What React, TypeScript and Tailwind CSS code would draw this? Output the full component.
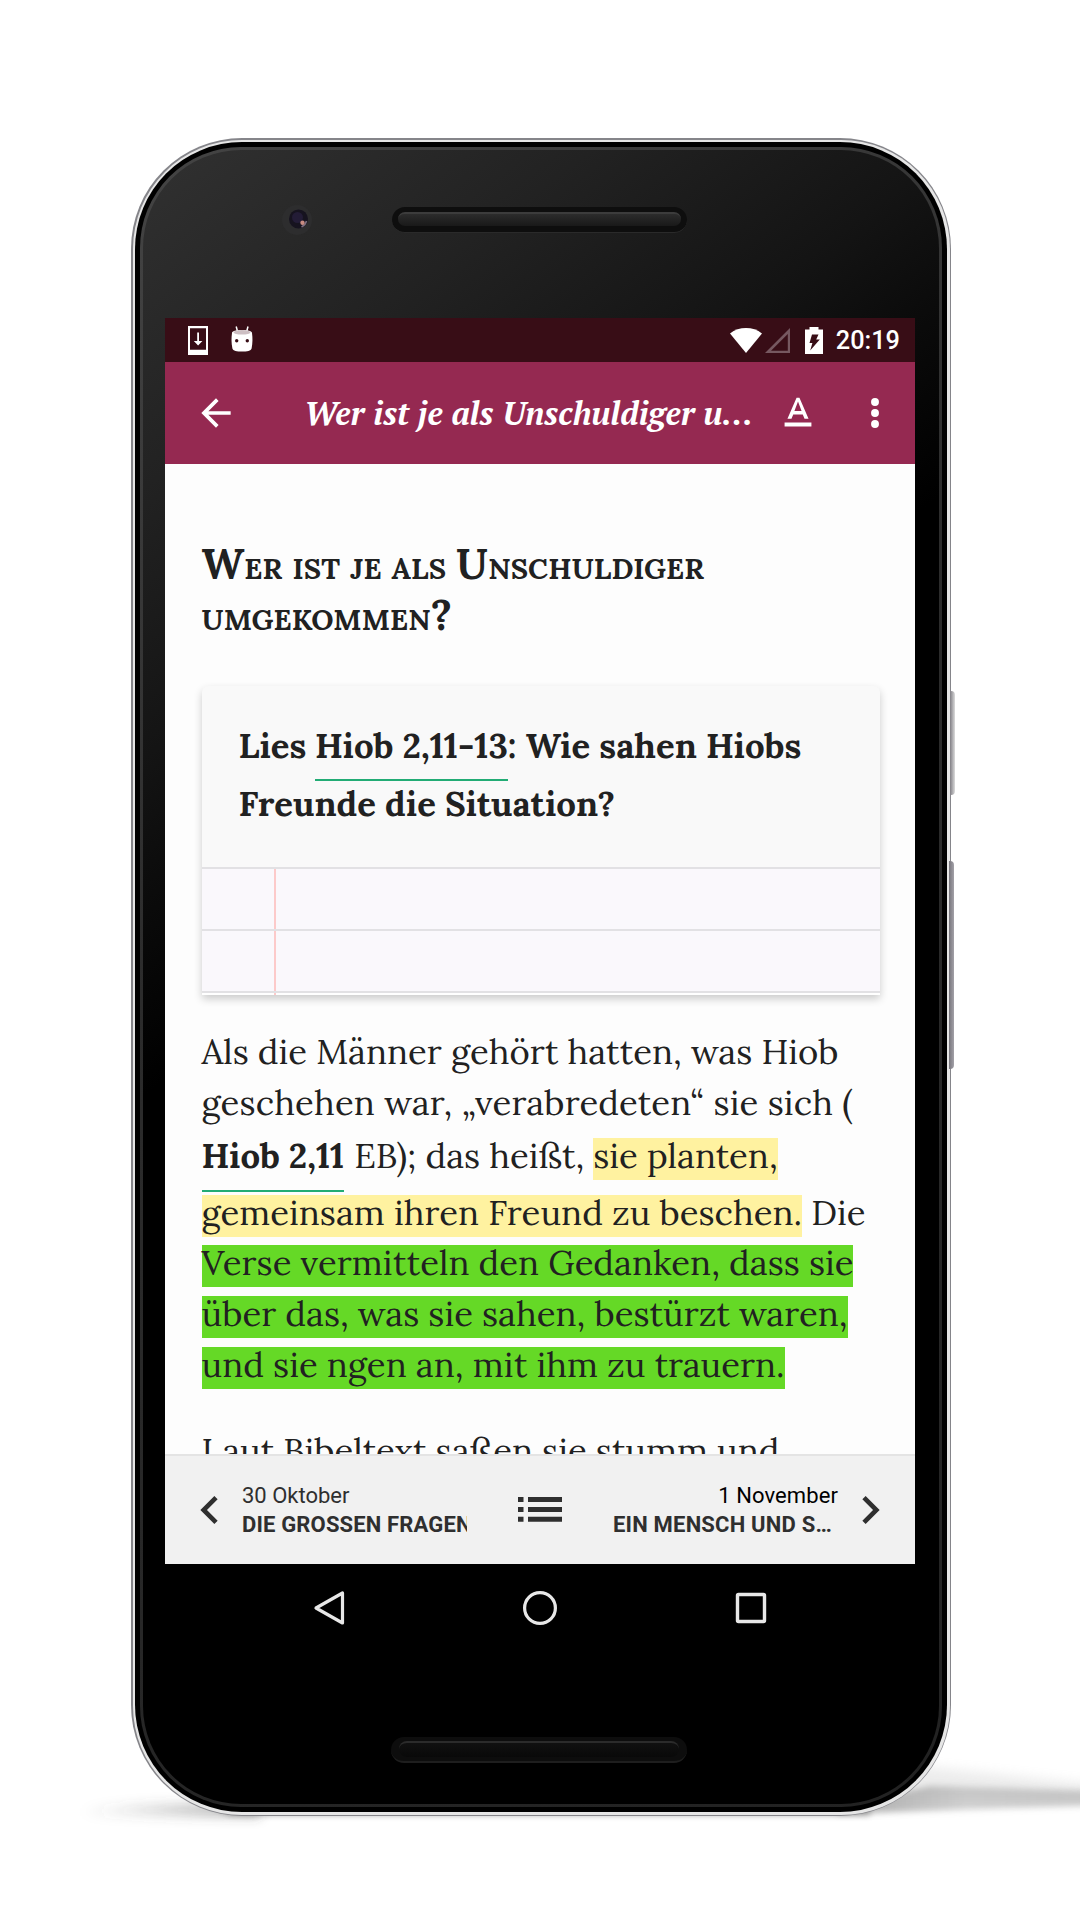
import type { ReactNode } from 'react';

function StatusBar() {
  return (
    <div className="flex h-11 shrink-0 items-center bg-[#380d16] pl-[23px] pr-[15px] text-white">
      <svg width="20" height="29" viewBox="0 0 20 29">
        <path fill="currentColor" fillRule="evenodd" d="M0 0h20v29H0zM2 2.2v21.6h16V2.2z" />
        <path fill="currentColor" d="M9.2 6.5h1.8V15h3.4L10.1 19.5 5.8 15h3.4z" />
      </svg>
      <svg width="22" height="26" viewBox="0 0 22 26" className="mb-[3px] ml-[23px]">
        <path stroke="currentColor" strokeWidth="1.5" d="M5.2.5 6.4 5M17 .5 15.8 5" />
        <path fill="currentColor" d="M1 7c0-2 4-3 10-3s10 1 10 3c.7 5 .7 10-.4 15.500C20 25 16 25.500 11 25.500S2 25 1.400 22.500C.3 17 .3 12 1 7z" />
        <ellipse cx="11" cy="6.300" rx="8.500" ry="2.300" fill="#cdbfc3" />
        <circle cx="5.700" cy="14.800" r="1.700" fill="#380d16" />
        <circle cx="16.300" cy="14.800" r="1.700" fill="#380d16" />
      </svg>
      <svg width="32" height="25" viewBox="0 0 32 25" className="ml-auto">
        <path fill="currentColor" d="M0 5.500C9-1.800 23-1.800 32 5.500L16 25z" />
      </svg>
      <svg width="26" height="25" viewBox="0 0 26 25" className="ml-[3px] text-[#765860]">
        <path fill="currentColor" fillRule="evenodd" d="M25 0v25H0zM22.800 6 6 22.800h16.800z" />
      </svg>
      <svg width="18" height="27" viewBox="0 0 18 27" className="ml-3.5">
        <path fill="currentColor" d="M0 2.500h4.500V0h9v2.500H18V27H0z" />
        <path fill="#380d16" d="M7 7.500h6.500l-2.300 5h3.600L5.200 23.500l2.200-7.500H4.500z" />
      </svg>
      <span className="ml-[13px] mt-0.5 font-['Roboto'] text-[25.3px] leading-[30px] font-medium">20:19</span>
    </div>
  );
}

function AppBar() {
  return (
    <div className="flex h-[102px] shrink-0 items-center bg-[#952951] text-white">
      <svg width="44" height="44" viewBox="0 0 24 24" fill="currentColor" className="ml-[29px]">
        <path d="M20 11H7.830l5.590-5.590L12 4l-8 8 8 8 1.410-1.410L7.830 13H20v-2z" />
      </svg>
      <h1 className="ml-[66px] w-[451px] whitespace-nowrap font-['PT_Serif',serif] text-[32.4px] leading-[42px] font-bold italic">
        Wer ist je als Unschuldiger u…
      </h1>
      <svg width="46" height="46" viewBox="0 0 24 24" fill="currentColor" className="ml-[20px]">
        <path d="M5 17v2h14v-2H5zm4.500-4.200h5l.9 2.200h2.100L12.750 4h-1.500L6.500 15h2.100l.9-2.200zM12 5.980 13.870 11h-3.740L12 5.980z" />
      </svg>
      <svg width="44" height="44" viewBox="0 0 24 24" fill="currentColor" className="ml-8">
        <circle cx="12" cy="6" r="2.150" />
        <circle cx="12" cy="12" r="2.150" />
        <circle cx="12" cy="18" r="2.150" />
      </svg>
    </div>
  );
}

function Line({ className, children }: { className?: string; children: ReactNode }) {
  return <div className={'flex h-[42px] whitespace-nowrap leading-[36px] ' + (className ?? '')}>{children}</div>;
}

function Question() {
  return (
    <section className="mt-[45px] flex h-[309px] w-[678px] flex-col rounded-t-md bg-[#f9f9f9] shadow-[0_4px_8px_rgba(0,0,0,0.2)]">
      <div className="h-[181px] pl-[37px] pt-[27px] text-[34.75px] font-bold">
        <div className="flex h-[58px] whitespace-nowrap leading-[66px]">
          <span className="mr-[8.5px]">Lies</span>
          <span className="h-[68px] border-b-2 border-[#22ac75]">Hiob 2,11-13</span>
          <span>: Wie sahen Hiobs</span>
        </div>
        <div className="whitespace-nowrap leading-[66px]">Freunde die Situation?</div>
      </div>
      <div className="flex h-[62px] border-t-2 border-[#e2e1e4] bg-[#faf8fc]"><i className="ml-[72.5px] w-[2px] bg-[#fccaca]" /></div>
      <div className="flex h-[62px] border-t-2 border-[#e2e1e4] bg-[#faf8fc]"><i className="ml-[72.5px] w-[2px] bg-[#fccaca]" /></div>
      <div className="flex h-1 border-t-2 border-[#e2e1e4] bg-white"><i className="ml-[72.5px] w-[2px] bg-[#fccaca]" /></div>
    </section>
  );
}

function Article() {
  return (
    <main className="h-[990px] overflow-hidden bg-[#fdfdfd] pl-[36.5px] font-['Lora',serif] text-[#212121]">
      <h2 className="mt-[75px] whitespace-nowrap text-[42.1px] leading-[51px] font-bold [font-variant:small-caps] tracking-[0.1px] [word-spacing:-1.2px]">
        Wer ist je als Unschuldiger
        <br />
        umgekommen?
      </h2>
      <Question />
      <div className="mt-[39px] text-[34.68px]">
        <Line>Als die Männer gehört hatten, was Hiob</Line>
        <Line className="mt-[9px] tracking-[0.11px]">geschehen war, „verabredeten“ sie sich (</Line>
        <Line className="mt-[11px]">
          <b className="h-[54px] border-b-2 border-[#22ac75]">Hiob 2,11</b>
          <span className="ml-[10px]">EB); das heißt,</span>
          <mark className="ml-[9px] bg-[#fff2a0] text-inherit">sie planten,</mark>
        </Line>
        <Line className="mt-[14.500px]">
          <mark className="bg-[#fff2a0] text-inherit">gemeinsam ihren Freund zu beschen.</mark>
          <span className="ml-[9px]">Die</span>
        </Line>
        <Line className="mt-[8px]"><mark className="bg-[#65d926] text-inherit">Verse vermitteln den Gedanken, dass sie</mark></Line>
        <Line className="mt-[9px]"><mark className="bg-[#65d926] text-inherit">über das, was sie sahen, bestürzt waren,</mark></Line>
        <Line className="mt-[9px]"><mark className="bg-[#65d926] text-inherit">und sie ngen an, mit ihm zu trauern.</mark></Line>
        <Line className="mt-[44.500px]">Laut Bibeltext saßen sie stumm und</Line>
      </div>
    </main>
  );
}

function Pager() {
  return (
    <footer className="flex h-[110px] shrink-0 items-center border-t-2 border-[#e4e4e4] bg-[#f1f1f1] font-['Roboto'] text-[22px] leading-[29px] text-[#2f2f2f]">
      <svg width="18" height="28" viewBox="8 6 7.410 12" fill="currentColor" className="ml-[35px]">
        <path d="M15.410 7.410 14 6 8 12l6 6 1.410-1.410L10.830 12z" />
      </svg>
      <div className="ml-6 w-[225px] overflow-hidden whitespace-nowrap">
        <div>30 Oktober</div>
        <div className="font-bold tracking-[0.15px]">DIE GROSSEN FRAGEN</div>
      </div>
      <svg width="44" height="25" viewBox="0 0 44 25" fill="currentColor" className="mb-0.5 ml-[51px]">
        <path d="M0 0h5.500v5H0zM10 0h34v5H10zM0 10h5.500v5H0zM10 10h34v5H10zM0 19.700h5.500v5H0zM10 19.700h34v5H10z" />
      </svg>
      <div className="ml-[51px] w-[225px] whitespace-nowrap">
        <div className="text-right text-black tracking-[0.1px]">1 November</div>
        <div className="font-bold tracking-[0.2px]">EIN MENSCH UND S…</div>
      </div>
      <svg width="18" height="28" viewBox="8.590 6 7.410 12" fill="currentColor" className="ml-6">
        <path d="M8.590 16.590 13.170 12 8.590 7.410 10 6l6 6-6 6z" />
      </svg>
    </footer>
  );
}

function NavBar() {
  return (
    <nav className="flex h-[88px] items-center text-[#e8e8e8]">
      <svg width="34" height="36" viewBox="0 0 34 36" fill="none" stroke="currentColor" strokeWidth="3.200" strokeLinejoin="round" className="ml-[147px]">
        <path d="M30.500 3v30L4 18z" />
      </svg>
      <svg width="36" height="36" viewBox="0 0 36 36" fill="none" stroke="currentColor" strokeWidth="3.200" className="ml-[176px]">
        <circle cx="18" cy="18" r="15.400" />
      </svg>
      <svg width="32" height="32" viewBox="0 0 32 32" fill="none" stroke="currentColor" strokeWidth="3.400" className="ml-[177px]">
        <rect x="2.500" y="2.500" width="27" height="27" rx="1" />
      </svg>
    </nav>
  );
}

function FloorShadow() {
  return (
    <svg className="absolute bottom-0 left-0" width="1080" height="220" viewBox="0 1700 1080 220">
      <defs>
        <filter id="soft" x="-20%" y="-100%" width="140%" height="300%"><feGaussianBlur stdDeviation="6" /></filter>
        <filter id="tight" x="-20%" y="-100%" width="140%" height="300%"><feGaussianBlur stdDeviation="3" /></filter>
        <linearGradient id="fade" x1="0" x2="1"><stop offset="0" stopColor="#555" stopOpacity="0" /><stop offset="1" stopColor="#444" stopOpacity=".5" /></linearGradient>
        <linearGradient id="cast" x1="0" x2="1"><stop offset="0" stopColor="#666" stopOpacity=".6" /><stop offset=".5" stopColor="#999" stopOpacity=".45" /><stop offset="1" stopColor="#999" stopOpacity=".5" /></linearGradient>
      </defs>
      <path filter="url(#soft)" fill="url(#fade)" d="M80 1810 Q170 1800 260 1806 V1816Q150 1816 80 1814z" />
      <path filter="url(#tight)" fill="#000" opacity=".35" d="M210 1804H870V1815H230z" />
      <path filter="url(#tight)" fill="url(#cast)" d="M830 1808 930 1786 1100 1791V1805L840 1814z" />
      <path filter="url(#soft)" fill="#999" opacity=".18" d="M910 1765 1100 1785V1800H880z" />
    </svg>
  );
}

function Device() {
  return (
    <div className="relative h-[1678px] w-[820px] rounded-[111px] bg-[#85858a] p-[1.500px]">
      <div className="absolute left-[819px] top-[553px] h-[104px] w-[5px] rounded-r-sm bg-gradient-to-r from-[#807e84] to-[#dcdcdc]" />
      <div className="absolute left-[818px] top-[723px] h-[208px] w-[5px] rounded-r-sm bg-gradient-to-r from-[#77757c] to-[#a3a1a8]" />
      <div className="h-full rounded-[109px] bg-[#e6e6e6] p-[2.500px]">
        <div className="h-full rounded-[107px] bg-black p-[5px]">
          <div className="h-full rounded-[101px] bg-[linear-gradient(150deg,#444444_0%,#2c2c2c_40%,#222222_100%)] p-[3px]">
            <div className="h-full rounded-[98px] bg-[linear-gradient(143deg,#313131_0%,#222222_15%,#141414_27%,#0a0a0a_34%,#000000_42%)] px-[22px] pt-[168px]">
              <div className="flex h-[1246px] w-[750px] flex-col overflow-hidden">
                <StatusBar />
                <AppBar />
                <Article />
                <Pager />
              </div>
              <NavBar />
            </div>
          </div>
        </div>
      </div>
      <svg className="absolute left-[149px] top-[65px]" width="34" height="34" viewBox="0 0 34 34">
        <circle cx="17" cy="17" r="15" fill="#2d2d2e" />
        <circle cx="18.500" cy="16" r="9.500" fill="#16131f" />
        <circle cx="17.500" cy="14.500" r="5.500" fill="#231c36" />
        <path d="M26.500 18a9 9 0 0 1-5 6" stroke="#7d6f80" strokeWidth="1.500" fill="none" />
        <circle cx="22.500" cy="19.800" r="2.200" fill="#c98c82" />
      </svg>
      <div className="absolute left-[261px] top-[69px] h-[26px] w-[295px] rounded-full border-b border-[#2a2a2a] bg-[#0e0e0e] px-[6px] py-[5px]">
        <div className="h-[14px] rounded-full border-t-2 border-[#3c3c3c] bg-gradient-to-b from-[#2c2c2c] to-[#191919]" />
      </div>
      <div className="absolute left-[260px] top-[1599px] h-[26px] w-[296px] rounded-full border-b-2 border-[#1e1e1e] bg-[#0d0d0d] px-[8px] py-[4px]">
        <div className="h-[16px] rounded-full border-t-2 border-[#2b2b2b] bg-gradient-to-b from-[#101010] to-[#090909]" />
      </div>
    </div>
  );
}

export default function App() {
  return (
    <div className="relative h-[1920px] w-[1080px] overflow-hidden bg-white pl-[131px] pt-[138px]">
      <FloorShadow />
      <Device />
    </div>
  );
}
